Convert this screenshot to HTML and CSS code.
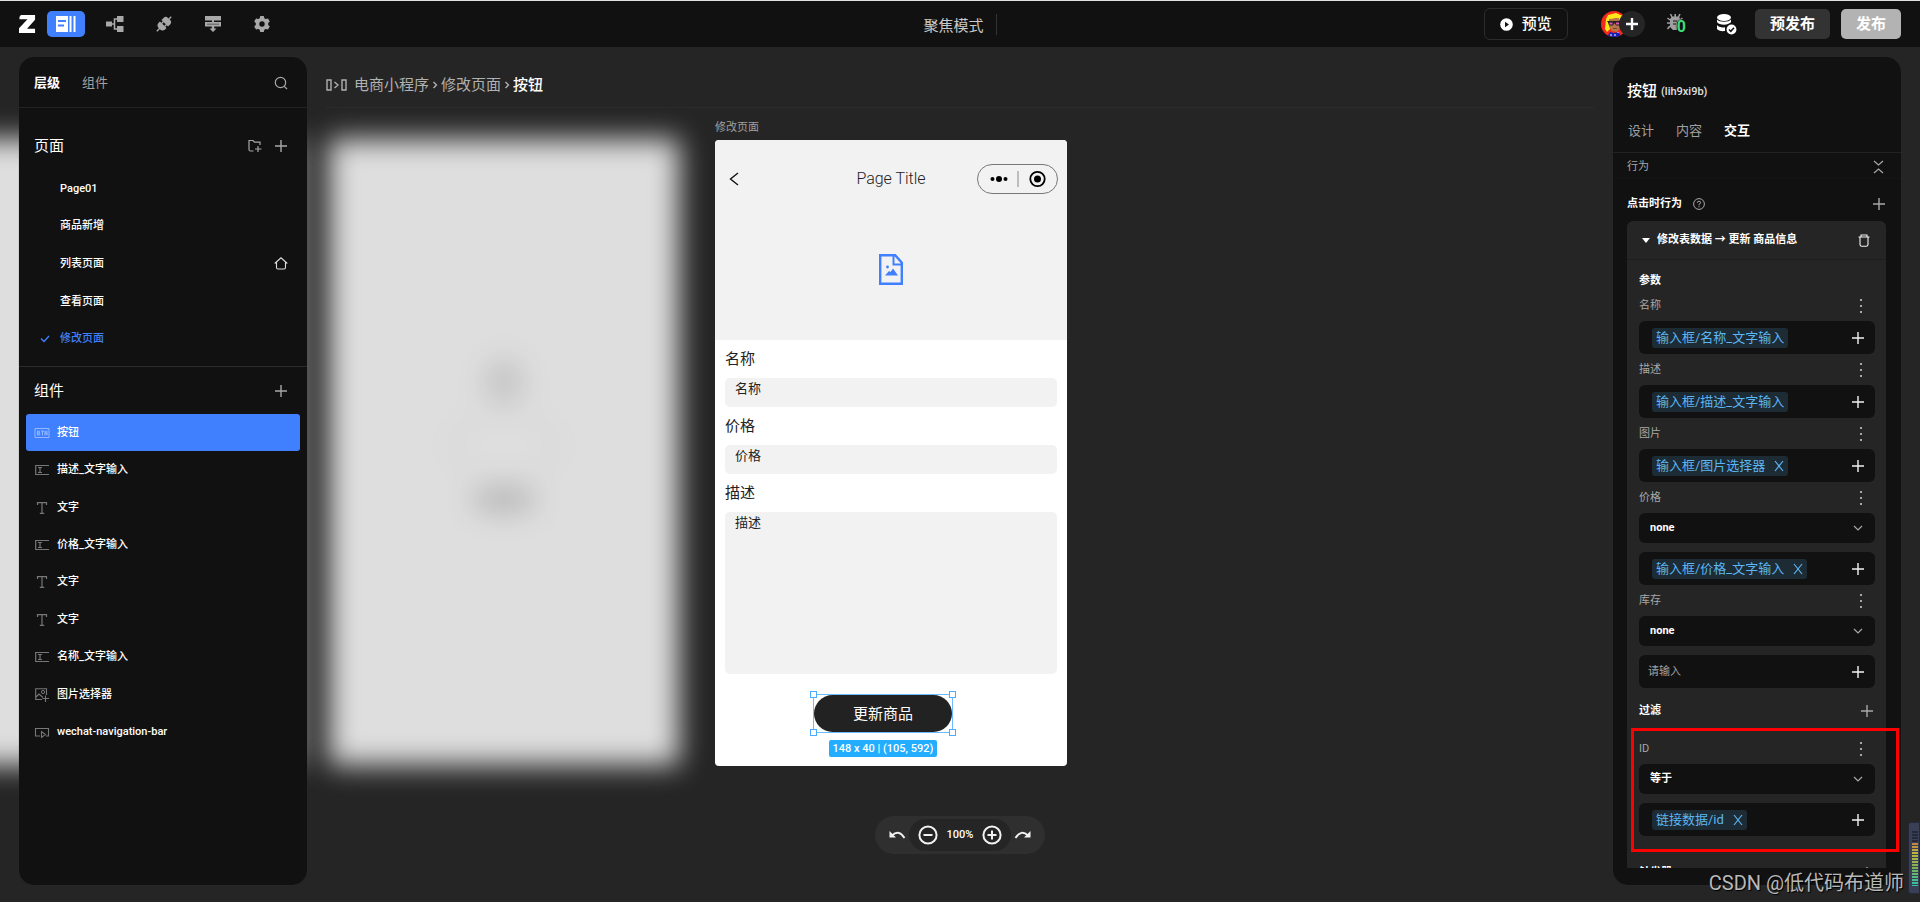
FILE: index.html
```html
<!DOCTYPE html>
<html lang="zh-CN">
<head>
<meta charset="utf-8">
<title>电商小程序 - 修改页面</title>
<link rel="stylesheet" href="styles.css">
</head>
<body class="app">
<svg class="defs" aria-hidden="true">
  <symbol id="plus" viewBox="0 0 14 14"><path d="M7 1v12M1 7h12" fill="none" stroke="currentColor" stroke-width="1.4"/></symbol>
  <symbol id="dots" viewBox="0 0 4 16"><path d="M1 1h2v2H1zM1 7h2v2H1zM1 13h2v2H1z" fill="currentColor"/></symbol>
  <symbol id="down" viewBox="0 0 10 6"><path d="M1 1l4 4 4-4" fill="none" stroke="currentColor" stroke-width="1.2"/></symbol>
  <symbol id="cross" viewBox="0 0 10 12"><path d="M1 1l8 10M9 1L1 11" fill="none" stroke="currentColor" stroke-width="1.2"/></symbol>
  <symbol id="ctext" viewBox="0 0 16 14"><path d="M3.500 4V1.700h9V4M8 1.700v10.600M5.800 12.300h4.400" fill="none" stroke="currentColor" stroke-width="1.200"/></symbol>
  <symbol id="cinput" viewBox="0 0 16 14"><path d="M15 2.500H1.700v9H15M4 4.500h4M4 9.500h4M6 4.500v5" fill="none" stroke="currentColor" stroke-width="1.200"/></symbol>
</svg>

<header class="topbar">
  <nav class="tools" aria-label="主导航">
    <svg class="logo" viewBox="0 0 18 20"><path d="M2 0h15v5L8.500 14.500H17V19H0v-5L9 4.500H.5V2z" fill="#fff"/></svg>
    <button class="tool tool-on" aria-label="编辑器"><svg width="20" height="16" viewBox="0 0 20 16"><path fill="#fff" fill-rule="evenodd" d="M0 0h12v16H0zM2 4v2h8V4zM2 8.500v2h6v-2zM13.500 0h2v16h-2zM17.500 0h2v16h-2z"/></svg></button>
    <button class="tool" aria-label="数据模型"><svg width="18" height="16" viewBox="0 0 18 16"><path fill="currentColor" d="M0 5.500h6v5H0zM11 0h6.500v6H11zM11 10h6.500v6H11z"/><path d="M5 8h4M11 3H8.500v10H11" fill="none" stroke="currentColor" stroke-width="1.600"/></svg></button>
    <button class="tool" aria-label="接口"><svg class="plug" width="18" height="18" viewBox="0 0 18 18"><g transform="rotate(45 9 9)" fill="currentColor"><path d="M8.200-2.500h1.600V1h.9a3.500 3.500 0 0 1 3.500 3.500v3.300H3.800V4.500A3.500 3.500 0 0 1 7.300 1h.9z"/><path d="M5.800 7h1.600v3.500H5.800zM10.600 7h1.600v3.500h-1.600z"/><path d="M3.800 10.200h10.400V12a4.500 4.500 0 0 1-4.400 4.500v4H8.200v-4A4.500 4.500 0 0 1 3.800 12z"/></g></svg></button>
    <button class="tool" aria-label="行为流"><svg width="16" height="16" viewBox="0 0 16 16"><path fill="currentColor" d="M0 0h16v4.500H0zM0 6h7V4h2v2h7v4.500H9.200v2H11.500L8 16l-3.500-3.500H6.800v-2H0z"/><path d="M2 8.200h12" stroke="#111" stroke-width="1" opacity=".5"/></svg></button>
    <button class="tool" aria-label="设置"><svg width="16" height="16" viewBox="0 0 16 16"><path fill="currentColor" fill-rule="evenodd" d="M6.200 0h3.600l.5 2.200 1.500.9 2.200-.7 1.800 3.100L14.200 7v2l1.600 1.500-1.800 3.100-2.200-.7-1.500.9L9.800 16H6.200l-.5-2.200-1.500-.9-2.200.7L.2 10.500 1.800 9V7L.2 5.500 2 2.400l2.200.7 1.500-.9zM8 5.300a2.700 2.700 0 1 0 0 5.400 2.700 2.700 0 0 0 0-5.400z"/></svg></button>
  </nav>
  <div class="mode">聚焦模式</div>
  <div class="actions">
    <button class="preview"><svg width="13" height="13" viewBox="0 0 13 13"><circle cx="6.500" cy="6.500" r="6.300" fill="#fff"/><path d="M5 3.800l4 2.700-4 2.700z" fill="#111"/></svg>预览</button>
    <div class="people">
      <svg class="avatar" viewBox="0 0 26 26"><defs><clipPath id="round"><circle cx="13" cy="13" r="13"/></clipPath></defs><g clip-path="url(#round)"><path fill="#f5281e" d="M0 0h26v26H0z"/><path fill="#ffe81a" d="M5 8l2-4 8-2 7 3 3 5-3 1-7-4-5 2-1 9-3 3-2-3z"/><path fill="#b5764a" d="M8 8l10-1 1 10-3 4-5-1-3-4z"/><path fill="#222" d="M6 10h14v1.500l-1 3h-4l-1-2h-1l-1 2H8l-1-3z"/><path fill="#e254b0" d="M8.500 11.500h3v2h-3zM15 11.500h3v2h-3z"/><path fill="#8d3b2a" d="M12 17h4v1h-4z"/><path fill="#1620b8" d="M6 26l3-5 4 1 4-1 4 5z"/><path fill="#fff" d="M9 24l1-1 1 1-1 1zM13 24l1-1 1 1-1 1zM16 22l1-1 1 1z"/></g></svg>
      <button class="invite" aria-label="邀请成员"><svg width="12" height="12" viewBox="0 0 12 12"><path d="M6 0v12M0 6h12" stroke="#fff" stroke-width="2.400"/></svg></button>
    </div>
    <button class="bug" aria-label="错误 0"><svg width="17" height="18" viewBox="0 0 17 18"><path fill="currentColor" d="M5 3.500h6.500L13.500 6v3H10v8H6l-3-3V6z"/><path d="M5 4L3.500 1M8.200 4V1M11.500 4L13 1M3 7L.5 5M3 10H0M3 13L.5 16M13 7l2.500-2" stroke="currentColor" stroke-width="1.600"/><path d="M6 8h4M6 11h3" stroke="#111" stroke-width="1.200"/></svg><span class="bug-count">0</span></button>
    <button class="plain" aria-label="数据库"><svg width="20" height="21" viewBox="0 0 20 21"><g fill="#fff"><ellipse cx="7" cy="3.500" rx="7" ry="3.500"/><path d="M0 5.500c2 3 12 3 14 0V8c-2 3.500-12 3.500-14 0zM0 11c2 2.500 5 2.600 8 2.200V17C4 17.500 1 16.500 0 15z"/><circle cx="14.500" cy="15.500" r="5.700" stroke="#111" stroke-width="1.500"/></g><path d="M12 15.500l1.800 1.800 3.200-3.600" fill="none" stroke="#111" stroke-width="1.500"/></svg></button>
    <button class="stage">预发布</button>
    <button class="publish">发布</button>
  </div>
</header>

<main class="workspace">
  <div class="canvas">
    <div class="ghost"></div>
    <div class="ghost"><i class="blob"></i><i class="blob-ring"></i><i class="blob blob-wide"></i></div>
    <section class="page">
      <p class="page-name">修改页面</p>
      <div class="phone">
        <div class="phone-nav">
          <svg width="10" height="14" viewBox="0 0 10 14"><path d="M9 1L1.500 7 9 13" fill="none" stroke="#111" stroke-width="1.400"/></svg>
          <span class="phone-title">Page Title</span>
          <svg class="capsule" viewBox="0 0 81 30"><rect x=".5" y=".5" width="80" height="29" rx="14.500" fill="none" stroke="#777"/><circle cx="15.500" cy="15" r="2"/><circle cx="22" cy="15" r="3"/><circle cx="28.500" cy="15" r="2"/><path d="M41 7v16" stroke="#888"/><circle cx="60.500" cy="15" r="7.200" fill="none" stroke="#000" stroke-width="1.800"/><circle cx="60.500" cy="15" r="3.500"/></svg>
        </div>
        <div class="phone-image"><svg width="24" height="31" viewBox="0 0 24 31"><path d="M1.200 1.200h15l6.600 7.500v21H1.200z" fill="none" stroke="#4080ff" stroke-width="2.400"/><path d="M14.500 1v9.500H23" fill="none" stroke="#4080ff" stroke-width="2"/><circle cx="8.500" cy="13" r="1.400" fill="#4080ff"/><path d="M6 21.500l4-4.500 1.500 1 2.500-3.500 5 7z" fill="#4080ff"/></svg></div>
        <form class="phone-form">
          <label class="phone-label" for="f-name">名称</label>
          <input class="phone-input" id="f-name" placeholder="名称">
          <label class="phone-label" for="f-price">价格</label>
          <input class="phone-input" id="f-price" placeholder="价格">
          <label class="phone-label" for="f-desc">描述</label>
          <textarea class="phone-input phone-area" id="f-desc" placeholder="描述"></textarea>
          <div class="selection">
            <div class="outline">
              <button class="submit" type="button">更新商品</button>
              <i class="knob knob-tl"></i><i class="knob knob-tr"></i><i class="knob knob-bl"></i><i class="knob knob-br"></i>
            </div>
            <span class="size">148 x 40 | (105, 592)</span>
          </div>
        </form>
      </div>
    </section>
  </div>

  <aside class="panel">
    <div class="tabs">
      <button class="tab tab-on">层级</button><button class="tab">组件</button>
      <button class="plain push" aria-label="搜索"><svg width="14" height="14" viewBox="0 0 14 14"><circle cx="6.500" cy="6.500" r="5.200" fill="none" stroke="currentColor" stroke-width="1.200"/><path d="M10.300 10.300l2.700 2.700" stroke="currentColor" stroke-width="1.200"/></svg></button>
    </div>
    <div class="heading heading-tall">
      <h2 class="heading-text">页面</h2>
      <button class="plain" aria-label="新建文件夹"><svg width="14" height="14" viewBox="0 0 14 14"><path d="M5.500 12H2.500Q1 12 1 10.500V1.500h4l1.500 1.700H12V6M10 7v6M7 10h6.500" fill="none" stroke="currentColor" stroke-width="1.200"/></svg></button>
      <button class="plain" aria-label="新建页面"><svg width="14" height="14"><use href="#plus"/></svg></button>
    </div>
    <ul class="pages">
      <li class="page-row"><span class="tick"></span>Page01</li>
      <li class="page-row"><span class="tick"></span>商品新增</li>
      <li class="page-row"><span class="tick"></span>列表页面<svg class="push" width="14" height="13" viewBox="0 0 14 13"><path d="M.7 6.500L7 .8l6.300 5.700M2.500 5.300V10.500Q2.500 12 4 12h6q1.500 0 1.500-1.500V5.300" fill="none" stroke="#ddd" stroke-width="1.100"/></svg></li>
      <li class="page-row"><span class="tick"></span>查看页面</li>
      <li class="page-row page-current"><span class="tick"><svg width="10" height="8" viewBox="0 0 10 8"><path d="M1 3.500L4 6.500 9 1" fill="none" stroke="currentColor" stroke-width="1.300"/></svg></span>修改页面</li>
    </ul>
    <div class="heading heading-line">
      <h2 class="heading-text">组件</h2>
      <button class="plain" aria-label="添加组件"><svg width="14" height="14"><use href="#plus"/></svg></button>
    </div>
    <ul class="parts">
      <li class="part part-on"><svg class="kind" viewBox="0 0 16 14"><path d="M1 2.500h14v9H1zM3.500 5v4H5q1.200-.1.800-1.300Q5.700 7 5 7H3.500M5 7q.9-.1.700-1T5 5H3.500M7 5h3M8.500 5v4.500M11 9.500V5l2 4V4.500" fill="none" stroke="currentColor" stroke-width=".8"/></svg>按钮</li>
      <li class="part"><svg class="kind"><use href="#cinput"/></svg>描述_文字输入</li>
      <li class="part"><svg class="kind"><use href="#ctext"/></svg>文字</li>
      <li class="part"><svg class="kind"><use href="#cinput"/></svg>价格_文字输入</li>
      <li class="part"><svg class="kind"><use href="#ctext"/></svg>文字</li>
      <li class="part"><svg class="kind"><use href="#ctext"/></svg>文字</li>
      <li class="part"><svg class="kind"><use href="#cinput"/></svg>名称_文字输入</li>
      <li class="part"><svg class="kind" viewBox="0 0 16 14"><path d="M8 11.500H1.700V.8h10.800V7M2 9l3-3 4 3.500M11.500 7.500V14M8.500 10.500H15" fill="none" stroke="currentColor" stroke-width="1.100"/><circle cx="9" cy="4" r="1.600" fill="none" stroke="currentColor"/></svg>图片选择器</li>
      <li class="part"><svg class="kind" viewBox="0 0 16 14"><path d="M6 11H1.500V3.500h13V11H12M7.500 6.500v6l4-3z" fill="none" stroke="currentColor" stroke-width="1.100"/></svg>wechat-navigation-bar</li>
    </ul>
  </aside>

  <section class="center">
    <nav class="crumbs" aria-label="路径">
      <svg width="22" height="12" viewBox="0 0 22 12"><path d="M1 1h4v10H1zM16 1h4v10h-4zM8.500 3l3.500 3-3.500 3" fill="none" stroke="currentColor" stroke-width="1.400"/></svg>
      <a class="crumb" href="#">电商小程序</a><svg class="sep" viewBox="0 0 5 8"><path d="M1 1l3 3-3 3" fill="none" stroke="currentColor" stroke-width="1.400"/></svg><a class="crumb" href="#">修改页面</a><svg class="sep" viewBox="0 0 5 8"><path d="M1 1l3 3-3 3" fill="none" stroke="currentColor" stroke-width="1.400"/></svg><span class="crumb-on">按钮</span>
    </nav>
    <div class="zoombar">
      <button class="plain light" aria-label="撤销"><svg width="17" height="10" viewBox="0 0 17 10"><path d="M3 5.500Q10-1 15.500 8" fill="none" stroke="currentColor" stroke-width="2"/><path d="M.5 1v6.500H7z" fill="currentColor"/></svg></button>
      <div class="zoom">
        <button class="plain light" aria-label="缩小"><svg width="20" height="20" viewBox="0 0 20 20"><circle cx="10" cy="10" r="8.600" fill="none" stroke="currentColor" stroke-width="2"/><path d="M5.500 10h9" stroke="currentColor" stroke-width="2"/></svg></button>
        <span>100%</span>
        <button class="plain light" aria-label="放大"><svg width="20" height="20" viewBox="0 0 20 20"><circle cx="10" cy="10" r="8.600" fill="none" stroke="currentColor" stroke-width="2"/><path d="M5.500 10h9M10 5.500v9" stroke="currentColor" stroke-width="2"/></svg></button>
      </div>
      <button class="plain light" aria-label="重做"><svg width="17" height="10" viewBox="0 0 17 10"><path d="M14 5.500Q7-1 1.500 8" fill="none" stroke="currentColor" stroke-width="2"/><path d="M16.500 1v6.500H10z" fill="currentColor"/></svg></button>
    </div>
  </section>

  <aside class="panel inspector">
    <div class="subject"><h2 class="heading-text">按钮</h2><span class="ident">(lih9xi9b)</span></div>
    <div class="tabs tabs-low"><button class="tab">设计</button><button class="tab">内容</button><button class="tab tab-on">交互</button></div>
    <div class="scroll">
      <div class="group"><span>行为</span><svg class="push" width="11" height="14" viewBox="0 0 11 14"><path d="M1 1l4.500 4L10 1M1 13l4.500-4 4.500 4" fill="none" stroke="currentColor" stroke-width="1.200"/></svg></div>
      <div class="event"><h3 class="strong">点击时行为</h3><svg width="12" height="12" viewBox="0 0 12 12"><circle cx="6" cy="6" r="5.400" fill="none" stroke="currentColor"/><path d="M4.300 4.800Q4.400 3.200 6 3.200T7.700 4.700Q7.600 5.600 6 6.300V7.300M6 8.200v1.100" fill="none" stroke="currentColor"/></svg><button class="plain push" aria-label="添加行为"><svg width="14" height="14"><use href="#plus"/></svg></button></div>
      <div class="card">
        <div class="card-head"><svg width="8" height="5" viewBox="0 0 8 5"><path d="M0 0h8L4 5z" fill="#fff"/></svg><h3 class="strong">修改表数据 → 更新 商品信息</h3><button class="plain light push" aria-label="删除"><svg width="12" height="13" viewBox="0 0 12 13"><path d="M.5 3h11M3 3V1h6v2M2 3v7.500Q2 12.300 4 12.300h4q2 0 2-1.800V3" fill="none" stroke="currentColor" stroke-width="1.100"/></svg></button></div>
        <div class="card-body">
          <h4 class="strong">参数</h4>
          <div class="param"><span>名称</span><button class="plain" aria-label="更多"><svg width="4" height="16"><use href="#dots"/></svg></button></div>
          <div class="slot"><span class="token">输入框/名称_文字输入</span><button class="plain light" aria-label="绑定"><svg width="14" height="14"><use href="#plus"/></svg></button></div>
          <div class="param"><span>描述</span><button class="plain" aria-label="更多"><svg width="4" height="16"><use href="#dots"/></svg></button></div>
          <div class="slot"><span class="token">输入框/描述_文字输入</span><button class="plain light" aria-label="绑定"><svg width="14" height="14"><use href="#plus"/></svg></button></div>
          <div class="param"><span>图片</span><button class="plain" aria-label="更多"><svg width="4" height="16"><use href="#dots"/></svg></button></div>
          <div class="slot"><span class="token">输入框/图片选择器<svg width="10" height="12"><use href="#cross"/></svg></span><button class="plain light" aria-label="绑定"><svg width="14" height="14"><use href="#plus"/></svg></button></div>
          <div class="param"><label for="s-price">价格</label><button class="plain" aria-label="更多"><svg width="4" height="16"><use href="#dots"/></svg></button></div>
          <div class="pick"><select class="select" id="s-price"><option>none</option></select><svg class="arrow"><use href="#down"/></svg></div>
          <div class="slot"><span class="token">输入框/价格_文字输入<svg width="10" height="12"><use href="#cross"/></svg></span><button class="plain light" aria-label="绑定"><svg width="14" height="14"><use href="#plus"/></svg></button></div>
          <div class="param"><label for="s-stock">库存</label><button class="plain" aria-label="更多"><svg width="4" height="16"><use href="#dots"/></svg></button></div>
          <div class="pick"><select class="select" id="s-stock"><option>none</option></select><svg class="arrow"><use href="#down"/></svg></div>
          <div class="slot slot-text"><input class="entry" aria-label="库存值" placeholder="请输入"><button class="plain light" aria-label="绑定"><svg width="14" height="14"><use href="#plus"/></svg></button></div>
          <div class="block-title"><h4 class="strong">过滤</h4><button class="plain" aria-label="添加过滤"><svg width="14" height="14"><use href="#plus"/></svg></button></div>
          <div class="marked">
            <div class="param"><label for="s-id">ID</label><button class="plain" aria-label="更多"><svg width="4" height="16"><use href="#dots"/></svg></button></div>
            <div class="pick"><select class="select" id="s-id"><option>等于</option></select><svg class="arrow"><use href="#down"/></svg></div>
            <div class="slot"><span class="token">链接数据/id<svg width="10" height="12"><use href="#cross"/></svg></span><button class="plain light" aria-label="绑定"><svg width="14" height="14"><use href="#plus"/></svg></button></div>
            <i class="frame"></i>
          </div>
          <div class="block-title block-next"><h4 class="strong">触发器</h4><button class="plain" aria-label="添加"><svg width="14" height="14"><use href="#plus"/></svg></button></div>
        </div>
      </div>
    </div>
  </aside>

  <div class="meter"><i class="meter-bars"></i></div>
  <p class="credit">CSDN @低代码布道师</p>
</main>
</body>
</html>
```

FILE: styles.css
```css
* { box-sizing: border-box; }

.app {
  margin: 0;
  height: 100vh;
  display: flex;
  flex-direction: column;
  overflow: hidden;
  background: #252525;
  color: #fff;
  font: 11px/16px Roboto, "Noto Sans CJK SC", sans-serif;
}

.defs { position: absolute; width: 0; height: 0; }

svg { display: block; flex: none; }
button, input, textarea, select { font: inherit; color: inherit; border: 0; padding: 0; margin: 0; }
button { background: none; cursor: pointer; }
h2, h3, h4, p, ul { margin: 0; padding: 0; list-style: none; }

.plain { display: flex; align-items: center; color: #a8a8a8; }
.light { color: #f2f2f2; }
.push { margin-left: auto; }
.strong { font-size: 11px; font-weight: 700; color: #fff; }

/* Top bar */
.topbar {
  flex: none;
  height: 47px;
  padding: 0 19px;
  display: grid;
  grid-template-columns: 1fr auto 1fr;
  align-items: center;
  background: #111;
  border-top: 1px solid #dfe3e0;
}
.tools { display: flex; align-items: center; gap: 11px; }
.logo { width: 17px; height: 19px; }
.tool {
  width: 38px;
  height: 26px;
  display: flex;
  align-items: center;
  justify-content: center;
  border-radius: 5px;
  color: #a8a8a8;
}
.tool-on { background: #4080ff; }
.plug { overflow: visible; width: 16px; height: 16px; }
.mode {
  padding: 3px 12px 0 0;
  border-right: 1px solid #333;
  color: #c8c8c8;
  font-size: 15px;
  line-height: 18px;
}
.actions { display: flex; align-items: center; justify-content: flex-end; }
.preview {
  height: 32px;
  padding: 0 15px;
  display: flex;
  align-items: center;
  gap: 9px;
  border: 1px solid #2c2c2c;
  border-radius: 6px;
  font-size: 15px;
  font-weight: 500;
}
.people { display: flex; margin-left: 33px; }
.avatar { width: 26px; height: 26px; }
.invite {
  width: 26px;
  height: 26px;
  margin-left: -8px;
  display: flex;
  align-items: center;
  justify-content: center;
  border-radius: 50%;
  background: #252525;
  z-index: 1;
}
.bug { display: flex; margin: 0 31px 0 22px; color: #a0a0a0; }
.bug-count {
  position: relative;
  margin-left: -7px;
  padding-top: 6px;
  color: #3ddc78;
  font-size: 16px;
  font-weight: 700;
  text-shadow: 0 0 2px #111, 0 0 2px #111;
}
.stage, .publish { height: 30px; border-radius: 5px; font-size: 15px; font-weight: 700; }
.stage { width: 75px; margin: 0 11px 0 18px; background: #333; }
.publish { width: 60px; background: #b3b3b3; }

/* Workspace */
.workspace {
  position: relative;
  flex: 1;
  min-height: 0;
  display: flex;
  padding: 10px 19px 17px;
}
.canvas {
  position: absolute;
  inset: 61px 0 0;
  display: flex;
  align-items: flex-start;
  gap: 32px;
  padding-top: 31px;
  overflow: hidden;
}
.ghost {
  flex: none;
  width: 350px;
  height: 626px;
  padding-bottom: 32px;
  display: flex;
  flex-direction: column;
  align-items: center;
  justify-content: center;
  background: #fff;
  opacity: .85;
  filter: blur(14px);
}
.ghost:first-child { margin-left: -53px; }
.blob { width: 40px; height: 46px; border-radius: 50%; background: #e2e2e2; }
.blob-ring { width: 110px; height: 82px; border: 10px solid #f9f9f9; border-radius: 50%; }
.blob-wide { width: 68px; height: 28px; background: #d4d4d4; }
.page { flex: none; width: 352px; margin: -19px 0 0 4px; }
.page-name { height: 20px; color: #a0a0a0; }
.phone {
  min-height: 626px;
  border-radius: 4px;
  overflow: hidden;
  background: #fff;
  color: #222;
}
.phone-nav {
  height: 61px;
  padding: 16px 9px 0 14px;
  display: grid;
  grid-template-columns: 1fr auto 1fr;
  align-items: center;
  background: #f2f2f2;
}
.phone-title { padding-right: 5px; font-size: 16px; line-height: 20px; font-weight: 300; }
.capsule { width: 81px; height: 30px; justify-self: end; }
.phone-image {
  height: 139px;
  padding-bottom: 2px;
  display: flex;
  align-items: center;
  justify-content: center;
  background: #f2f2f2;
}
.phone-form { display: flex; flex-direction: column; padding: 0 10px 6px; }
.phone-label { font-size: 15px; line-height: 38px; }
.phone-input {
  height: 29px;
  padding: 0 10px 8px;
  border-radius: 5px;
  background: #f2f2f2;
  font-size: 13px;
  resize: none;
}
.phone-input::placeholder { color: #222; opacity: 1; }
.phone-area { height: 162px; padding-top: 2px; line-height: 18px; }
.selection {
  width: 138px;
  margin: 21px 0 0 89px;
  display: flex;
  flex-direction: column;
  align-items: center;
  gap: 8px;
}
.outline { position: relative; width: 100%; height: 37px; outline: 1px solid #6cbcff; }
.submit {
  width: 100%;
  height: 37px;
  border-radius: 19px;
  background: #222;
  color: #fff;
  font-size: 15px;
}
.knob { position: absolute; width: 7px; height: 7px; background: #fff; border: 1px solid #4aabff; }
.knob-tl { left: -4px; top: -4px; }
.knob-tr { right: -4px; top: -4px; }
.knob-bl { left: -4px; bottom: -4px; }
.knob-br { right: -4px; bottom: -4px; }
.size {
  padding: 0 4px;
  border-radius: 2px;
  background: #22adff;
  color: #fff;
  line-height: 17px;
  font-weight: 500;
  white-space: nowrap;
}

/* Side panels */
.panel {
  position: relative;
  flex: none;
  width: 288px;
  display: flex;
  flex-direction: column;
  border-radius: 15px;
  background: #111;
  box-shadow: 0 0 1px #333;
}
.tabs {
  flex: none;
  height: 51px;
  padding: 1px 19px 0 15px;
  display: flex;
  align-items: center;
  gap: 22px;
  border-bottom: 1px solid #222;
}
.tab { color: #a0a0a0; font-size: 13px; }
.tab-on { color: #fff; font-weight: 700; }
.heading {
  flex: none;
  height: 48px;
  padding: 0 19px 0 15px;
  display: flex;
  align-items: center;
  gap: 12px;
}
.heading-tall { height: 62px; padding-top: 14px; }
.heading-line { border-top: 1px solid #2b2b2b; }
.heading-text { flex: 1; font-size: 15px; font-weight: 400; }
.pages { height: 196px; display: grid; grid-auto-rows: 1fr; padding-bottom: 8px; font-weight: 500; }
.page-row { display: flex; align-items: center; padding: 0 19px 0 20px; }
.page-current { color: #4080ff; }
.tick { width: 21px; padding-left: 1px; }
.parts { height: 337px; display: grid; grid-auto-rows: 1fr; padding: 0 7px; font-weight: 500; }
.part { display: flex; align-items: center; gap: 7px; padding-left: 8px; border-radius: 3px; }
.part-on { background: #4080ff; }
.kind { width: 16px; height: 14px; color: #777; }
.part-on .kind { color: #a8c6ff; }

/* Center column */
.center {
  position: relative;
  flex: 1;
  min-width: 0;
  display: flex;
  flex-direction: column;
  justify-content: space-between;
  align-items: center;
  padding: 0 19px 31px;
}
.crumbs {
  align-self: stretch;
  height: 51px;
  padding-top: 6px;
  display: flex;
  align-items: center;
  gap: 3px;
  border-bottom: 1px solid #2b2b2b;
  color: #b0b0b0;
  font-size: 15px;
}
.crumb { color: inherit; text-decoration: none; }
.crumbs .crumb:first-of-type { margin-left: 3px; }
.crumb-on { color: #fff; font-weight: 500; }
.sep { width: 6px; height: 8px; }
.zoombar {
  height: 38px;
  padding: 0 14px;
  display: flex;
  align-items: center;
  gap: 3px;
  border-radius: 19px;
  background: #2f2f2f;
}
.zoom {
  height: 32px;
  padding: 0 9px;
  display: flex;
  align-items: center;
  gap: 9px;
  border-radius: 16px;
  background: #252525;
  font-weight: 500;
}

/* Inspector */
.inspector { padding-bottom: 17px; }
.subject {
  flex: none;
  height: 52px;
  padding: 16px 14px 0;
  display: flex;
  align-items: center;
  gap: 4px;
}
.subject .heading-text { flex: none; font-weight: 500; }
.ident { padding-top: 1px; font-weight: 500; color: #e0e0e0; }
.tabs-low { height: 44px; }
.scroll { flex: 1; min-height: 0; overflow: hidden; color: #a8a8a8; }
.group { height: 26px; padding: 2px 17px 0 14px; display: flex; align-items: center; border-bottom: 1px solid #151515; }
.event { height: 42px; padding: 7px 15px 0 14px; display: flex; align-items: center; gap: 11px; }
.card { margin: 0 15px 0 14px; border-radius: 6px; background: #252525; }
.card-head {
  height: 39px;
  padding: 0 16px 0 15px;
  display: flex;
  align-items: center;
  gap: 7px;
  border-bottom: 1px solid #1e1e1e;
}
.card-body { padding: 12px 11px 20px 12px; }
.card-body > .strong { line-height: 18px; }
.param { height: 31px; padding-right: 12px; display: flex; align-items: center; justify-content: space-between; }
.slot {
  height: 33px;
  padding: 0 10px 0 13px;
  display: flex;
  align-items: center;
  justify-content: space-between;
  border-radius: 6px;
  background: #111;
}
.slot-text { padding-left: 9px; }
.token {
  height: 20px;
  padding: 0 4px;
  display: flex;
  align-items: center;
  gap: 9px;
  border-radius: 3px;
  background: #1d2b34;
  color: #5cb6f5;
  font-size: 13px;
}
.pick { position: relative; margin-bottom: 9px; }
.select {
  display: block;
  width: 100%;
  height: 30px;
  padding: 0 11px;
  appearance: none;
  border-radius: 6px;
  background: #111;
  color: #fff;
  font-weight: 700;
}
.arrow { position: absolute; right: 12px; top: 12px; width: 10px; height: 6px; pointer-events: none; }
.entry { flex: 1; min-width: 0; background: none; }
.entry::placeholder { color: #a0a0a0; opacity: 1; }
.block-title { height: 45px; padding-right: 1px; display: flex; align-items: center; justify-content: space-between; }
.block-next { margin-top: 14px; }
.marked { position: relative; }
.frame { position: absolute; inset: -5px -24px -16px -8px; border: 3px solid #f00; pointer-events: none; }

/* Overlays at the window's corner */
.meter {
  position: absolute;
  right: 0;
  bottom: 8px;
  width: 12px;
  height: 72px;
  padding: 8px 1px 7px 3px;
  border-radius: 3px 0 0 3px;
  border: 1px solid #252838;
  background: #3b3f56;
}
.meter-bars {
  display: block;
  height: 100%;
  background:
    repeating-linear-gradient(transparent 0 2px, #3b3f56 2px 3px),
    linear-gradient(#252838 20%, #c08040 21%, #c4b43c 40%, #80b450 65%, #30c0a0);
}
.credit {
  position: absolute;
  right: 16px;
  bottom: 5px;
  color: #b8b8b8;
  font-size: 20px;
  line-height: 28px;
  text-shadow: 1px 1px 1px #000;
}
```
